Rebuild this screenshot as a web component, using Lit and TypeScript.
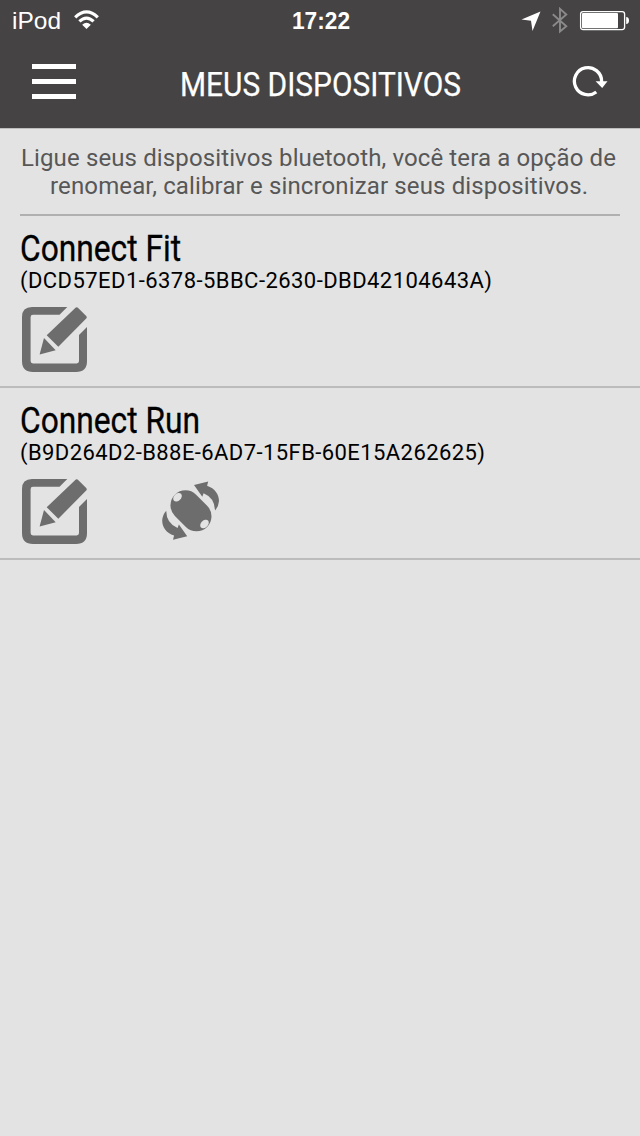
import { LitElement, html, css, svg } from "lit";
import { customElement, property } from "lit/decorators.js";

interface Device {
  name: string;
  uuid: string;
  nameWidth: number;
  uuidWidth: number;
  canCalibrate: boolean;
}

// One line of text fitted to a fixed measure, condensing the face when needed.
const fitted = (text: string, width: number, height: number, baseline: number, inset = 0, adjust = "spacingAndGlyphs") => html`
  <svg class="line" width=${width + 8} height=${height} overflow="visible">
    ${svg`<text x=${inset} y=${baseline} textLength=${width} lengthAdjust=${adjust}>${text}</text>`}
  </svg>
`;

@customElement("status-bar")
export class StatusBar extends LitElement {
  static styles = css`
    :host {
      display: grid;
      grid-template-columns: 1fr auto 1fr;
      height: 40px;
      color: #fff;
      fill: #fff;
      font-family: "Liberation Sans", Arial, sans-serif;
      font-size: 24px;
    }
    svg { display: block; }
    .left { display: flex; gap: 5px; padding-left: 12px; }
    .time { font-weight: 700; font-size: 23px; padding-left: 9px; }
    .right { display: flex; justify-content: flex-end; }
  `;
  render() {
    return html`
      <div class="left">
        ${fitted("iPod", 49, 40, 29)}
        <svg width="26" height="40" viewBox="0 0 26 40" fill="none" stroke="#fff">
          <path d="M1.2 17.3Q12.5 6.5 23.8 17.3" stroke-width="3.2" />
          <path d="M5.4 21.4Q12.5 14.8 19.6 21.4" stroke-width="3.2" />
          <path d="M8.2 24.7Q12.5 20.8 16.8 24.7L12.5 29Z" fill="#fff" stroke="none" />
        </svg>
      </div>
      <div class="time">${fitted("17:22", 58, 40, 29)}</div>
      <div class="right">
        <svg width="120" height="40" viewBox="520 0 120 40">
          <path d="M540.5 11.5L532.5 31L531 20.8L521.5 19.5Z" />
          <path d="M552.8 14.3L566.3 26.2L560 31.5V8.8L566.3 14.5L552.8 26.2" fill="none" stroke="#8b8a8a" stroke-width="1.9" />
          <rect x="580.6" y="11.6" width="44" height="18" rx="2.5" fill="none" stroke="#fff" stroke-width="1.3" />
          <rect x="582" y="13" width="36" height="15.2" rx="1" />
          <path d="M626.2 17Q629 17.4 629 20.5T626.2 24Z" />
        </svg>
      </div>
    `;
  }
}

@customElement("nav-bar")
export class NavBar extends LitElement {
  static styles = css`
    :host {
      display: flex;
      justify-content: space-between;
      height: 88px;
      padding: 0 32px;
      box-sizing: border-box;
      fill: #fff;
      font: 34px Roboto, sans-serif;
    }
    svg { display: block; }
    .title { stroke: #fff; stroke-width: 0.25px; }
  `;
  render() {
    return html`
      <svg width="44" height="88" viewBox="0 0 44 88">
        <path d="M0 24H44V29H0ZM0 39H44V44H0ZM0 54H44V59H0Z" />
      </svg>
      <div class="title">${fitted("MEUS DISPOSITIVOS", 281, 88, 56)}</div>
      <svg width="36" height="88" viewBox="572 40 36 88">
        <path d="M596.3 92A13.6 13.6 0 1 1 601.6 81.2V82.5" fill="none" stroke="#fff" stroke-width="3.3" />
        <path d="M595.6 81.2H607.5L602.2 88Z" />
      </svg>
    `;
  }
}

@customElement("device-row")
export class DeviceRow extends LitElement {
  @property({ attribute: false }) device!: Device;

  static styles = css`
    :host {
      display: block;
      box-sizing: border-box;
      height: 172px;
      padding-left: 20px;
      border-bottom: 2px solid #bcbcbc;
      font-family: Roboto, sans-serif;
    }
    svg { display: block; }
    .name { font-size: 36px; stroke: #000; stroke-width: 0.3px; }
    .uuid { font-size: 22px; }
    .actions {
      display: flex;
      gap: 75px;
      padding: 11px 0 0 2px;
      fill: #6d6d6d;
    }
    .shine { fill: #e3e3e3; }
    .capsule { stroke: #6d6d6d; stroke-width: 30px; stroke-linecap: round; }
  `;
  render() {
    const d = this.device;
    const arrow = "M32 3.1L46.2 -.4L45.1 3.8C53 6.5 57 12.5 57 19Q56.6 24.5 53 28.6Q52.8 16 41.6 11.3L40.3 14.8Z";
    return html`
      <div class="name">${fitted(d.name, d.nameWidth, 52, 45)}</div>
      <div class="uuid">${fitted(d.uuid, d.uuidWidth, 28, 20, 0, "spacing")}</div>
      <div class="actions">
        <svg width="65" height="65" viewBox="0 0 65 65">
          <path d="M45.3 0L37.5 7.8H11Q8.6 7.8 8.6 10.2V54Q8.6 56.4 11 56.4H54.6Q57 56.4 57 54V28L65 20V54Q65 65 54 65H11Q0 65 0 54V10Q0 0 10 0Z" />
          <path d="M53 1.2Q54.7 -0.5 56.4 1.2L64.2 9Q65.4 10.3 64.2 11.6L36.3 39.7L24.7 28.2Z" />
          <path d="M22 31L33.7 43.2L17.6 47.4Z" />
        </svg>
        ${d.canCalibrate
          ? html`<svg width="60" height="60" viewBox="0 -3 60 60" overflow="visible">
              <path class="capsule" d="M23.5 23.3L34.5 34.3" />
              <ellipse class="shine" cx="15.5" cy="15.3" rx="5" ry="3.5" transform="rotate(-45 15.5 15.3)" />
              <ellipse class="shine" cx="42.5" cy="42" rx="5" ry="3.5" transform="rotate(-45 42.5 42)" />
              <path d=${arrow} />
              <path transform="rotate(180 28.6 28.7)" d=${arrow} />
            </svg>`
          : null}
      </div>
    `;
  }
}

@customElement("app-root")
export class AppRoot extends LitElement {
  private devices: Device[] = [
    { name: "Connect Fit", uuid: "(DCD57ED1-6378-5BBC-2630-DBD42104643A)", nameWidth: 161, uuidWidth: 472, canCalibrate: false },
    { name: "Connect Run", uuid: "(B9D264D2-B88E-6AD7-15FB-60E15A262625)", nameWidth: 180, uuidWidth: 465, canCalibrate: true },
  ];

  static styles = css`
    :host {
      display: block;
      min-height: 1136px;
      background: #e3e3e3;
      color: #000;
    }
    svg { display: block; }
    header { background: #454344; border-bottom: 1px solid #bdbdbd; }
    .intro {
      display: flex;
      flex-direction: column;
      align-items: center;
      height: 87px;
      box-sizing: border-box;
      margin: 0 20px;
      padding-top: 15px;
      border-bottom: 2px solid #b0b0b0;
      color: #575757;
      fill: #575757;
      font: 24px Roboto, sans-serif;
    }
  `;
  render() {
    return html`
      <header>
        <status-bar></status-bar>
        <nav-bar></nav-bar>
      </header>
      <div class="intro">
        ${fitted("Ligue seus dispositivos bluetooth, você tera a opção de", 595, 28, 22, 2, "spacing")}
        ${fitted("renomear, calibrar e sincronizar seus dispositivos.", 538, 28, 22, 3, "spacing")}
      </div>
      <main>${this.devices.map((d) => html`<device-row .device=${d}></device-row>`)}</main>
    `;
  }
}
